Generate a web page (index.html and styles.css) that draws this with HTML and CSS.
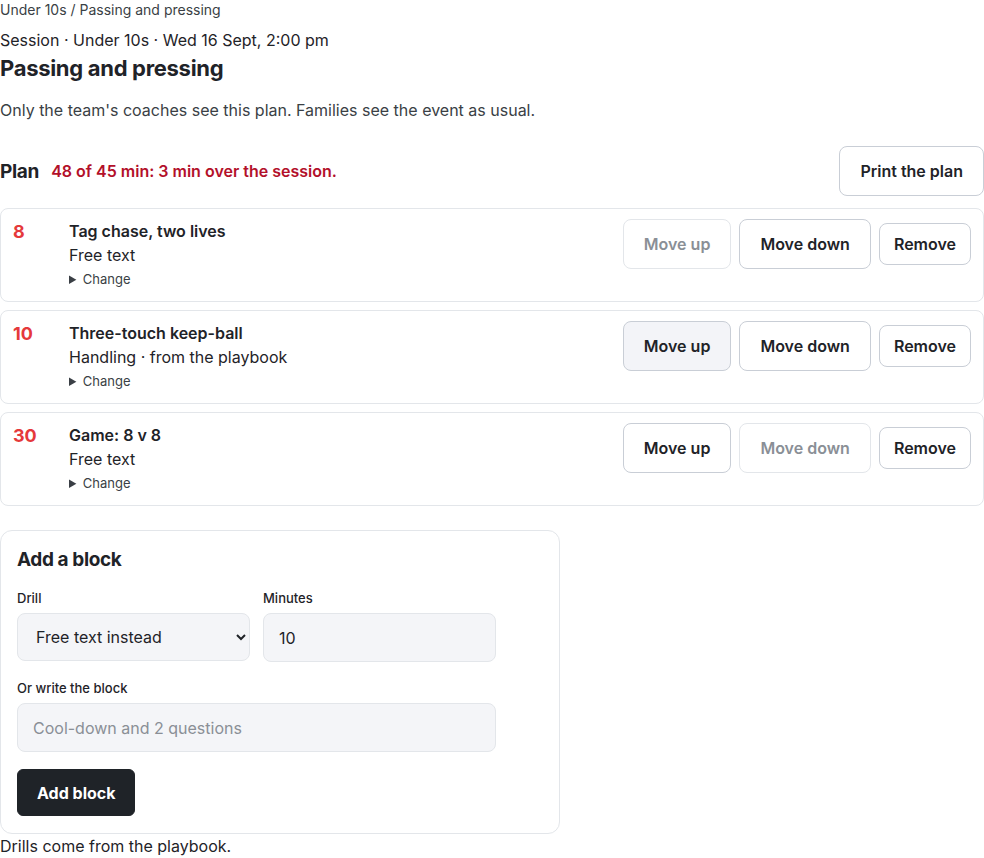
FILE: index.html
```html
<!DOCTYPE html>
<html lang="en">
<head>
    <meta charset="UTF-8">
    <meta name="viewport" content="width=device-width, initial-scale=1.0">
    <title>Passing and pressing</title>
    <link rel="stylesheet" href="styles.css">
</head>
<body>

    <div class="crumbs">Under 10s / Passing and pressing</div>
    <div class="meta">Session · Under 10s · Wed 16 Sept, 2:00 pm</div>
    <h1>Passing and pressing</h1>
    <p class="note">Only the team's coaches see this plan. Families see the event as usual.</p>

    <div class="plan-head">
        <h2>Plan</h2>
        <span class="over">48 of 45 min: 3 min over the session.</span>
        <button class="btn print">Print the plan</button>
    </div>

    <ul class="blocks">
        <li class="block">
            <span class="mins">8</span>
            <div class="info">
                <div class="title">Tag chase, two lives</div>
                <div class="sub">Free text</div>
                <details><summary>Change</summary></details>
            </div>
            <div class="actions">
                <button class="btn" disabled>Move up</button>
                <button class="btn">Move down</button>
                <button class="btn small">Remove</button>
            </div>
        </li>
        <li class="block">
            <span class="mins">10</span>
            <div class="info">
                <div class="title">Three-touch keep-ball</div>
                <div class="sub">Handling · from the playbook</div>
                <details><summary>Change</summary></details>
            </div>
            <div class="actions">
                <button class="btn hover">Move up</button>
                <button class="btn">Move down</button>
                <button class="btn small">Remove</button>
            </div>
        </li>
        <li class="block">
            <span class="mins">30</span>
            <div class="info">
                <div class="title">Game: 8 v 8</div>
                <div class="sub">Free text</div>
                <details><summary>Change</summary></details>
            </div>
            <div class="actions">
                <button class="btn">Move up</button>
                <button class="btn" disabled>Move down</button>
                <button class="btn small">Remove</button>
            </div>
        </li>
    </ul>

    <form class="add-card" onsubmit="return false">
        <h3>Add a block</h3>
        <div class="row">
            <label class="field">
                <span>Drill</span>
                <select>
                    <option>Free text instead</option>
                    <option>Three-touch keep-ball</option>
                </select>
            </label>
            <label class="field">
                <span>Minutes</span>
                <input type="number" value="10">
            </label>
        </div>
        <label class="field wide">
            <span>Or write the block</span>
            <input type="text" placeholder="Cool-down and 2 questions">
        </label>
        <button class="btn dark" type="submit">Add block</button>
    </form>
    <div class="foot">Drills come from the playbook.</div>

</body>
</html>
```

FILE: styles.css
```css
body {
    font-family: Inter, "Liberation Sans", sans-serif;
    color: #1f2328;
    margin: 0;
    width: 984px;
}

.crumbs {
    font-size: 14px;
    line-height: 20px;
    color: #3a3f45;
}

.meta {
    margin-top: 10px;
    font-size: 16px;
    line-height: 20px;
}

h1 {
    margin: 4px 0 0;
    font-size: 22px;
    line-height: 28px;
    font-weight: 700;
    letter-spacing: -0.3px;
}

.note {
    margin: 16px 0 0;
    font-size: 16px;
    line-height: 24px;
    color: #3a3f45;
}

.plan-head {
    display: flex;
    align-items: center;
    gap: 12px;
    margin-top: 24px;
}

.plan-head h2 {
    margin: 0;
    font-size: 19px;
    font-weight: 700;
    letter-spacing: -0.3px;
}

.over {
    color: #b3102a;
    font-size: 16px;
    font-weight: 600;
}

.print {
    margin-left: auto;
}

.btn {
    font-family: inherit;
    font-size: 16px;
    font-weight: 600;
    color: #1f2328;
    background: #fff;
    border: 1px solid #c9ced6;
    border-radius: 8px;
    height: 50px;
    padding: 0 20px;
    cursor: pointer;
}

.btn.small {
    height: 42px;
    padding: 0 14px;
}

.btn.hover {
    background: #f3f4f8;
}

.btn:disabled {
    color: #8a8f96;
    border-color: #e3e6ea;
    cursor: default;
}

.blocks {
    list-style: none;
    margin: 12px 0 0;
    padding: 0;
    display: flex;
    flex-direction: column;
    gap: 8px;
}

.block {
    display: grid;
    grid-template-columns: 44px 1fr auto;
    gap: 12px;
    border: 1px solid #e3e6ea;
    border-radius: 8px;
    padding: 10px 12px 12px;
}

.mins {
    color: #e5393b;
    font-size: 18px;
    font-weight: 700;
    line-height: 22px;
    padding-top: 2px;
}

.title {
    font-size: 16px;
    font-weight: 600;
    line-height: 22px;
    padding: 1px 0;
}

.sub {
    font-size: 16px;
    line-height: 24px;
}

details {
    margin-top: 2px;
    font-size: 13px;
    line-height: 20px;
    color: #3a3f45;
}

summary {
    cursor: pointer;
}

.actions {
    display: flex;
    align-items: center;
    gap: 8px;
    align-self: start;
}

.add-card {
    margin-top: 24px;
    width: 526px;
    border: 1px solid #e3e6ea;
    border-radius: 12px;
    padding: 16px 16px 17px;
}

.add-card h3 {
    margin: 0 0 16px;
    font-size: 19px;
    line-height: 26px;
    font-weight: 700;
    letter-spacing: -0.4px;
}

.row {
    display: grid;
    grid-template-columns: 233px 233px;
    align-items: start;
    gap: 13px;
}

.field {
    display: flex;
    flex-direction: column;
    gap: 6px;
}

.field span {
    font-size: 13px;
    line-height: 18px;
    font-weight: 500;
}

.field.wide {
    margin-top: 17px;
    width: 479px;
}

select,
input {
    font-family: inherit;
    font-size: 16px;
    color: #1f2328;
    background: #f4f5f8;
    border: 1px solid #e3e6ea;
    border-radius: 8px;
    height: 49px;
    padding: 0 15px;
    box-sizing: border-box;
}

select {
    height: 48px;
    padding-left: 14px;
}

input::placeholder {
    color: #8a8f96;
}

.btn.dark {
    margin-top: 17px;
    height: 47px;
    padding: 0 19px;
    background: #1f2328;
    border-color: #1f2328;
    color: #fff;
    font-weight: 700;
    border-radius: 6px;
}

.foot {
    font-size: 16px;
    line-height: 24px;
}
```
